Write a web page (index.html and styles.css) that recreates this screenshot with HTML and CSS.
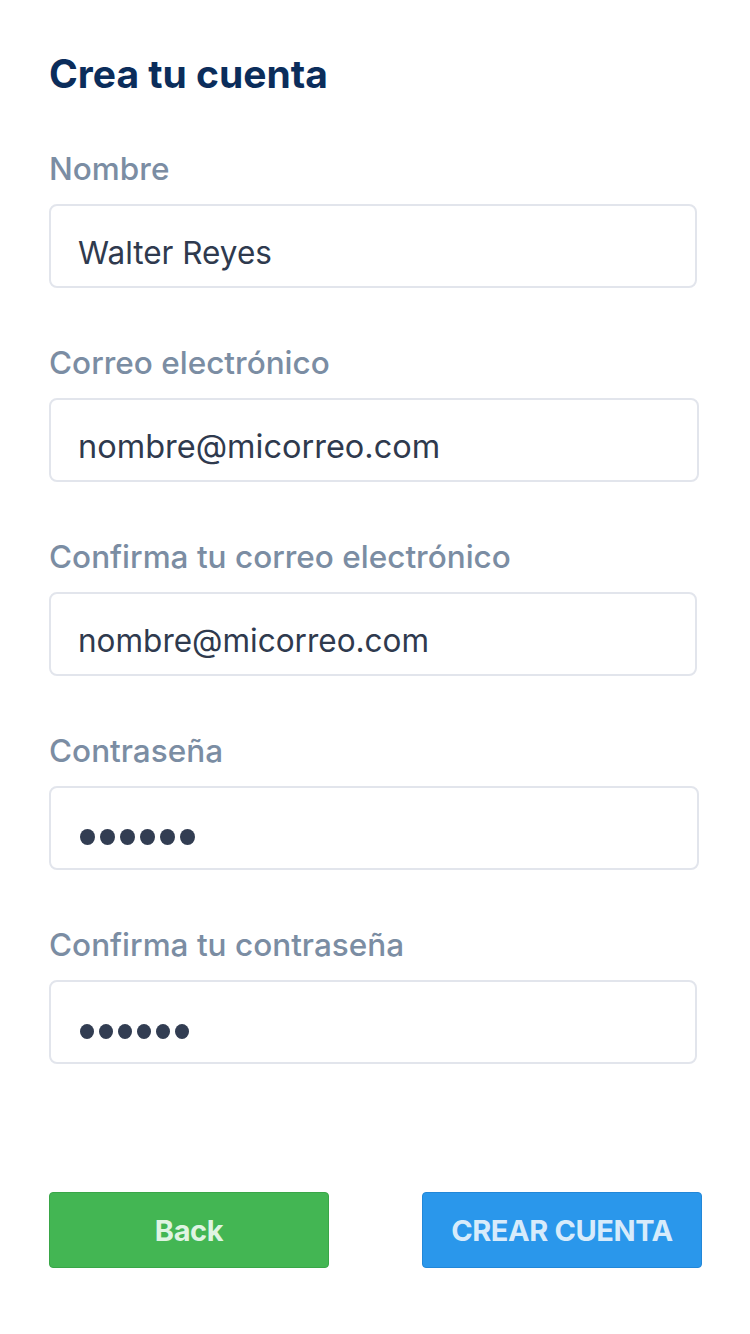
FILE: index.html
```html
<!DOCTYPE html>
<html lang="es">
<head>
<meta charset="utf-8">
<title>Crea tu cuenta</title>
<link rel="stylesheet" href="styles.css">
</head>
<body>
<main class="page">
  <h1 class="title">Crea tu cuenta</h1>
  <form class="form">
    <div class="field">
      <label class="label">Nombre</label>
      <div class="input">Walter Reyes</div>
    </div>
    <div class="field">
      <label class="label">Correo electrónico</label>
      <div class="input input--wide">nombre@micorreo.com</div>
    </div>
    <div class="field">
      <label class="label">Confirma tu correo electrónico</label>
      <div class="input">nombre@micorreo.com</div>
    </div>
    <div class="field">
      <label class="label">Contraseña</label>
      <div class="input input--wide input--pw" aria-label="contraseña oculta">
        <span class="dot"></span><span class="dot"></span><span class="dot"></span><span class="dot"></span><span class="dot"></span><span class="dot"></span>
      </div>
    </div>
    <div class="field">
      <label class="label">Confirma tu contraseña</label>
      <div class="input input--pw input--pw-small" aria-label="contraseña oculta">
        <span class="dot"></span><span class="dot"></span><span class="dot"></span><span class="dot"></span><span class="dot"></span><span class="dot"></span>
      </div>
    </div>
  </form>
  <div class="actions">
    <button class="btn btn--back" type="button">Back</button>
    <button class="btn btn--create" type="button">CREAR CUENTA</button>
  </div>
</main>
</body>
</html>
```
FILE: styles.css
```css
html, body {
  margin: 0;
  padding: 0;
  background: #ffffff;
}
body {
  font-family: Inter, Roboto, "Liberation Sans", sans-serif;
  width: 750px;
  height: 1334px;
}
.page {
  padding: 52px 0 0 49px;
  display: flex;
  flex-direction: column;
}
.title {
  margin: 0;
  font-size: 39px;
  line-height: 44px;
  font-weight: 700;
  color: #0b2d5b;
  letter-spacing: 0;
}
.form {
  display: flex;
  flex-direction: column;
  gap: 57px;
  margin-top: 55px;
  width: 648px;
}
.field {
  display: flex;
  flex-direction: column;
  gap: 17px;
}
.label {
  font-size: 31.5px;
  line-height: 36px;
  font-weight: 500;
  color: #7b8da3;
}
.input {
  box-sizing: border-box;
  height: 84px;
  border: 2px solid #e2e5ec;
  border-radius: 8px;
  padding-left: 27px;
  padding-top: 12px;
  display: flex;
  align-items: center;
  font-size: 31.5px;
  color: #2f3a4e;
}
.input--wide {
  width: 650px;
  font-size: 32.5px;
}
.input--pw {
  gap: 5px;
  padding-left: 29px;
  padding-top: 18px;
}
.dot {
  width: 15px;
  height: 16px;
  border-radius: 50%;
  background: #323d52;
}
.input--pw-small .dot {
  width: 14px;
  height: 15px;
}
.actions {
  display: flex;
  justify-content: space-between;
  width: 653px;
  margin-top: 128px;
}
.btn {
  width: 280px;
  height: 76px;
  border-radius: 4px;
  font-family: Inter, Roboto, "Liberation Sans", sans-serif;
  font-size: 29px;
  font-weight: 700;
  letter-spacing: -0.4px;
  cursor: pointer;
}
.btn--back {
  background: #43b653;
  border: 1px solid #39a648;
  color: #dff4e2;
}
.btn--create {
  background: #2a97eb;
  border: 1px solid #2287d8;
  color: #d7ebfb;
}
```
